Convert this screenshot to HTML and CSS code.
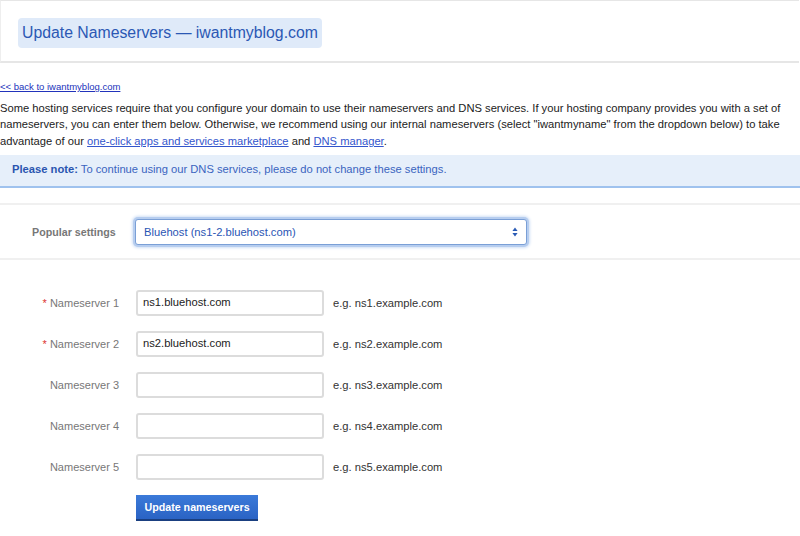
FILE: index.html
```html
<!DOCTYPE html>
<html>
<head>
<meta charset="utf-8">
<link rel="stylesheet" href="styles.css">
</head>
<body>
<div class="header">
  <h1 class="title">Update Nameservers — iwantmyblog.com</h1>
</div>
<a class="back" href="#">&lt;&lt; back to iwantmyblog.com</a>
<p class="intro">Some hosting services require that you configure your domain to use their nameservers and DNS services. If your hosting company provides you with a set of nameservers, you can enter them below. Otherwise, we recommend using our internal nameservers (select "iwantmyname" from the dropdown below) to take advantage of our <a href="#">one-click apps and services marketplace</a> and <a href="#">DNS manager</a>.</p>
<div class="note"><b>Please note:</b> To continue using our DNS services, please do not change these settings.</div>
<div class="popular">
  <label class="plabel">Popular settings</label>
  <div class="select">
    <span>Bluehost (ns1-2.bluehost.com)</span>
    <svg class="arrows" width="6" height="10" viewBox="0 0 6 10"><path d="M3 0.5 L5.6 4 H0.4 Z M3 9.5 L5.6 6 H0.4 Z" fill="#2a5bb5"/></svg>
  </div>
</div>
<div class="form">
  <div class="row"><label class="lbl"><span class="req">*</span> Nameserver 1</label><div class="input">ns1.bluehost.com</div><span class="hint">e.g. ns1.example.com</span></div>
  <div class="row"><label class="lbl"><span class="req">*</span> Nameserver 2</label><div class="input">ns2.bluehost.com</div><span class="hint">e.g. ns2.example.com</span></div>
  <div class="row"><label class="lbl">Nameserver 3</label><div class="input"></div><span class="hint">e.g. ns3.example.com</span></div>
  <div class="row"><label class="lbl">Nameserver 4</label><div class="input"></div><span class="hint">e.g. ns4.example.com</span></div>
  <div class="row"><label class="lbl">Nameserver 5</label><div class="input"></div><span class="hint">e.g. ns5.example.com</span></div>
  <div class="actions"><button class="btn">Update nameservers</button></div>
</div>
</body>
</html>
```
FILE: styles.css
```css
* { box-sizing: border-box; }
body {
  margin: 0;
  width: 800px;
  font-family: "Liberation Sans", Arial, sans-serif;
  color: #222;
  background: #fff;
}
.header {
  height: 63px;
  width: 799px;
  border-top: 1px solid #e6e6e6;
  border-left: 1px solid #eeeeee;
  border-bottom: 2px solid #e6e6e6;
  padding: 17px 0 0 17px;
}
.title {
  display: inline-block;
  margin: 0;
  height: 30px;
  padding: 5px 4px 0 4px;
  background: #dfeaf9;
  border-radius: 4px;
  font-size: 15.8px;
  font-weight: normal;
  color: #2b58b4;
  line-height: 20px;
}
.back {
  display: block;
  margin-top: 18px;
  font-size: 9.5px;
  color: #2233bb;
  line-height: 12px;
}
.intro {
  margin: 7px 0 0 0;
  font-size: 11.2px;
  line-height: 16.4px;
  color: #222;
}
.intro a { color: #3355cc; }
.note {
  margin-top: 6px;
  height: 33px;
  background: #e6effa;
  border-bottom: 2px solid #9fc2ee;
  padding: 8px 12px 0;
  font-size: 11.2px;
  color: #3a64bf;
}
.note b { color: #2a55b0; }
.popular {
  margin-top: 15px;
  border-top: 2px solid #f0f0f0;
  border-bottom: 2px solid #f0f0f0;
  height: 57px;
  display: flex;
  align-items: center;
}
.plabel {
  width: 135px;
  padding-left: 32px;
  font-size: 10.7px;
  font-weight: bold;
  color: #777;
}
.select {
  width: 392px;
  height: 26px;
  border: 1px solid #7a9fd6;
  border-radius: 3px;
  box-shadow: 0 0 0 2px #b6cdef, 0 0 3px 3px #cfdff5;
  display: flex;
  align-items: center;
  justify-content: space-between;
  padding: 0 8px;
  font-size: 11.2px;
  color: #2a55b4;
  background: #fff;
}
.arrows { display: block; }
.form { padding-top: 30px; }
.row {
  display: flex;
  align-items: center;
  height: 26px;
  margin-bottom: 15px;
}
.lbl {
  width: 119px;
  text-align: right;
  font-size: 11px;
  color: #777;
}
.req { color: #d33; }
.input {
  margin-left: 17px;
  width: 188px;
  height: 26px;
  border: 2px solid #dcdcdc;
  border-radius: 3px;
  padding: 4px 5px;
  font-size: 11.2px;
  color: #222;
}
.hint {
  margin-left: 9px;
  font-size: 11.2px;
  color: #333;
}
.actions { padding-left: 136px; margin-top: 13px; }
.btn {
  width: 122px;
  height: 26px;
  border: 0;
  border-bottom: 2px solid #1a3f80;
  background: linear-gradient(#3b7ad9, #2a63c4);
  color: #fff;
  font-family: "Liberation Sans", Arial, sans-serif;
  font-size: 10.7px;
  font-weight: bold;
  padding: 0;
}
```
